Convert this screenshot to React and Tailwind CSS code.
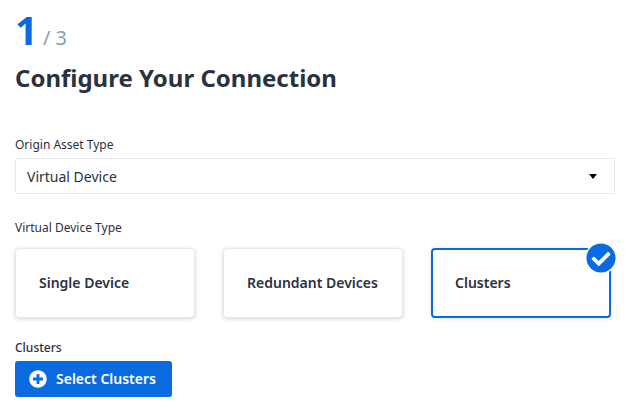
import { FaCheckCircle, FaPlusCircle } from 'react-icons/fa';

const Card = ({ label, selected }) => {
    return (
        <div className={selected
            ? "relative w-[180px] h-[70px] flex items-center pl-[22px] bg-white rounded-[4px] border-2 border-[#0a6ae0] shadow-[0_1px_4px_rgba(40,50,70,0.15)]"
            : "relative w-[180px] h-[70px] flex items-center pl-[23px] bg-white rounded-[4px] border border-[#e4e6ec] shadow-[0_1px_4px_rgba(40,50,70,0.2)]"}>
            <span className="text-sm font-semibold text-[#2a3140]">{label}</span>
            {selected && (
                <div className="absolute -right-[8px] -top-[8px] w-[32px] h-[32px] flex items-center justify-center bg-white rounded-full">
                    <FaCheckCircle className="w-[30px] h-[30px] text-[#0a6ae0]" />
                </div>
            )}
        </div>
    )
}

const App = () => {
    return (
        <div className="w-[631px] h-[416px] overflow-hidden bg-white px-[15px] font-['Noto_Sans',sans-serif] text-[#2a3140]">
            {/* step counter */}
            <div className="flex items-baseline h-[54px] pt-[2px]">
                <span className="text-[40px] leading-[56px] font-bold text-[#0a6ae0]">1</span>
                <span className="ml-[5px] text-xl text-[#8d9db5]">/ 3</span>
            </div>

            {/* title */}
            <h1 className="mt-[6px] text-2xl leading-[36px] font-bold">Configure Your Connection</h1>

            {/* origin asset type */}
            <div className="mt-[39px] text-xs leading-[20px]">Origin Asset Type</div>
            <div className="mt-[3px] w-[600px] h-[36px] flex items-center justify-between pl-[11px] pr-[17px] bg-white rounded-[2px] border border-[#e8e9ee]">
                <span className="pt-[2px] text-sm">Virtual Device</span>
                <div className="w-0 h-0 border-x-[4px] border-x-transparent border-t-[5px] border-t-black"></div>
            </div>

            {/* device type */}
            <div className="mt-[24px] text-xs leading-[20px]">Virtual Device Type</div>
            <div className="mt-[10px] flex gap-[28px]">
                <Card label="Single Device" />
                <Card label="Redundant Devices" />
                <Card label="Clusters" selected />
            </div>

            {/* clusters */}
            <div className="mt-[20px] text-xs leading-[20px] font-medium">Clusters</div>
            <button className="mt-[3px] w-[157px] h-[36px] flex items-center pl-[14px] gap-[9px] bg-[#0a6ae0] rounded-[3px] text-white text-sm font-semibold">
                <FaPlusCircle className="w-[18px] h-[18px]" />
                Select Clusters
            </button>
        </div>
    )
}

export default App
